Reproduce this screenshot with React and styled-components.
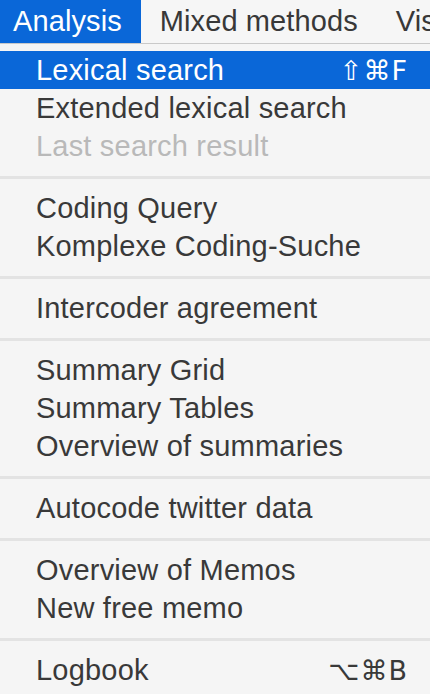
import React from "react";
import styled, { createGlobalStyle } from "styled-components";

const Global = createGlobalStyle`
  html, body {
    margin: 0;
    padding: 0;
    background: #f5f5f5;
    overflow: hidden;
  }
  body {
    font-family: "Liberation Sans", Arial, "DejaVu Sans", sans-serif;
    -webkit-font-smoothing: antialiased;
  }
`;

const groups = [
  [
    { label: "Lexical search", shortcut: "⇧⌘F", active: true },
    { label: "Extended lexical search" },
    { label: "Last search result", disabled: true },
  ],
  [{ label: "Coding Query" }, { label: "Komplexe Coding-Suche" }],
  [{ label: "Intercoder agreement" }],
  [
    { label: "Summary Grid" },
    { label: "Summary Tables" },
    { label: "Overview of summaries" },
  ],
  [{ label: "Autocode twitter data" }],
  [{ label: "Overview of Memos" }, { label: "New free memo" }],
  [{ label: "Logbook", shortcut: "⌥⌘B" }],
];

const App = () => {
  return (
    <Screen>
      <Global />
      <MenuBar>
        <BarItem $active $first>
          Analysis
        </BarItem>
        <BarItem>Mixed methods</BarItem>
        <BarItem>Visual Tools</BarItem>
      </MenuBar>
      <Menu>
        {groups.map((group, gi) => (
          <React.Fragment key={gi}>
            {gi > 0 && <Separator />}
            {group.map((item) => (
              <Item
                key={item.label}
                $active={item.active}
                $disabled={item.disabled}
              >
                <span>{item.label}</span>
                {item.shortcut && <Shortcut>{item.shortcut}</Shortcut>}
              </Item>
            ))}
          </React.Fragment>
        ))}
      </Menu>
    </Screen>
  );
};

const Screen = styled.div`
  width: 430px;
  height: 694px;
  overflow: hidden;
  background: #f5f5f5;
`;

const MenuBar = styled.div`
  display: flex;
  height: 43px;
  background: #f6f6f6;
  border-bottom: 1px solid #c9c9c9;
  white-space: nowrap;
`;

const BarItem = styled.div`
  display: flex;
  align-items: center;
  flex-shrink: 0;
  padding: 0 19px 0 ${(p) => (p.$first ? "13px" : "19px")};
  font-size: 29px;
  letter-spacing: 0.1px;
  color: ${(p) => (p.$active ? "#ffffff" : "#383838")};
  background: ${(p) => (p.$active ? "#0a67d8" : "transparent")};
`;

const Menu = styled.div`
  display: flex;
  flex-direction: column;
  padding-top: 7px;
`;

const Item = styled.div`
  display: flex;
  align-items: center;
  justify-content: space-between;
  height: 38px;
  padding: 0 22px 0 36px;
  font-size: 29px;
  letter-spacing: 0.2px;
  white-space: nowrap;
  color: ${(p) =>
    p.$active ? "#ffffff" : p.$disabled ? "#b9b9b9" : "#393939"};
  background: ${(p) => (p.$active ? "#0a67d8" : "transparent")};
`;

const Shortcut = styled.span`
  font-family: "DejaVu Sans", "Liberation Sans", sans-serif;
  font-size: 27px;
  letter-spacing: 1px;
`;

const Separator = styled.div`
  height: 3px;
  margin: 11px 0 10px;
  background: #e3e3e3;
`;

export default App;
